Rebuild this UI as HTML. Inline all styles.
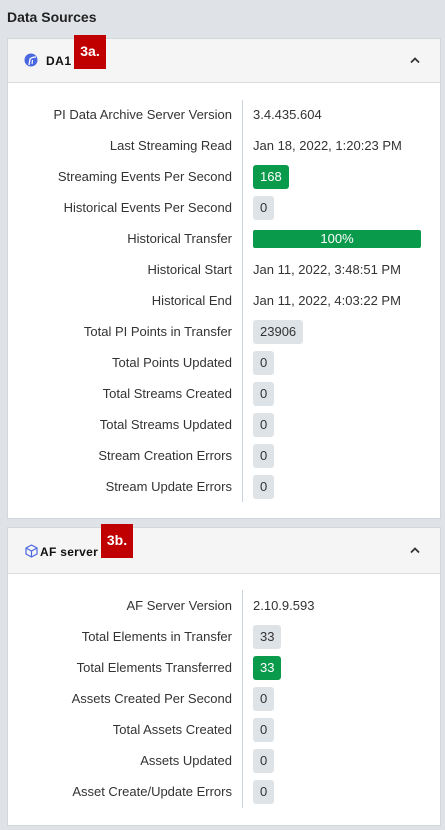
<!DOCTYPE html>
<html><head><meta charset="utf-8"><style>
*{margin:0;padding:0;box-sizing:border-box}
body{width:445px;height:830px;background:#dfe2e6;font-family:"Liberation Sans",sans-serif;position:relative;overflow:hidden;color:#222}
.top{position:absolute;left:7px;top:9px;font-size:14px;font-weight:bold;color:#222}
.card{position:absolute;left:7px;width:434px;background:#fff;border:1px solid #d4d7da}
.hd{position:absolute;left:0;top:0;right:0;background:#f5f5f5;border-bottom:1px solid #dcdcdc}
.title{position:absolute;font-size:12px;font-weight:bold;color:#111;letter-spacing:.5px}
.car{position:absolute;right:20px}
.tag{position:absolute;background:#c00000;color:#fff;font-weight:bold;font-size:14px;text-align:center;line-height:33px;width:32px;height:34px}
.div{position:absolute;left:234px;width:1px;background:#c9d3dd}
.row{position:absolute;left:0;right:0;height:24px;font-size:13px;color:#333}
.row .l{position:absolute;right:208px;top:4px;white-space:nowrap}
.row .v{position:absolute;left:245px;top:4px;white-space:nowrap}
.b{position:absolute;left:245px;top:0;height:24px;padding:0 7px;line-height:24px;background:#dee3e8;border-radius:3px;font-size:13px;color:#333}
.g{background:#0a9a4c;color:#fff}
.bar{position:absolute;left:245px;top:1px;width:168px;height:18px;background:#0a9a4c;border-radius:2px;color:#fff;text-align:center;font-size:13px;line-height:18px}
</style></head><body>
<div class="top">Data Sources</div>

<div class="card" style="top:38px;height:481px">
 <div class="hd" style="height:44px">
  <svg style="position:absolute;left:16px;top:14px" width="14" height="14" viewBox="0 0 14 14"><circle cx="7" cy="7" r="6.5" fill="#4a67e0"/><path d="M5 12 L6 6 Q8 4 12 4" stroke="#fff" stroke-width="1.3" fill="none"/><path d="M8 11 L8.5 7" stroke="#fff" stroke-width="1.1"/></svg>
  <div class="title" style="left:38px;top:15px">DA1</div>
  <svg class="car" style="top:18px" width="10" height="7" viewBox="0 0 10 7"><path d="M1 5.5 L5 1.5 L9 5.5" stroke="#333" stroke-width="1.8" fill="none"/></svg>
 </div>
 <div class="div" style="top:61px;height:402px"></div>
 <div class="row" style="top:64px"><span class="l">PI Data Archive Server Version</span><span class="v">3.4.435.604</span></div>
 <div class="row" style="top:95px"><span class="l">Last Streaming Read</span><span class="v">Jan 18, 2022, 1:20:23 PM</span></div>
 <div class="row" style="top:126px"><span class="l">Streaming Events Per Second</span><span class="b g">168</span></div>
 <div class="row" style="top:157px"><span class="l">Historical Events Per Second</span><span class="b">0</span></div>
 <div class="row" style="top:188px"><span class="l">Historical Transfer</span><span class="bar" style="top:3px">100%</span></div>
 <div class="row" style="top:219px"><span class="l">Historical Start</span><span class="v">Jan 11, 2022, 3:48:51 PM</span></div>
 <div class="row" style="top:250px"><span class="l">Historical End</span><span class="v">Jan 11, 2022, 4:03:22 PM</span></div>
 <div class="row" style="top:281px"><span class="l">Total PI Points in Transfer</span><span class="b">23906</span></div>
 <div class="row" style="top:312px"><span class="l">Total Points Updated</span><span class="b">0</span></div>
 <div class="row" style="top:343px"><span class="l">Total Streams Created</span><span class="b">0</span></div>
 <div class="row" style="top:374px"><span class="l">Total Streams Updated</span><span class="b">0</span></div>
 <div class="row" style="top:405px"><span class="l">Stream Creation Errors</span><span class="b">0</span></div>
 <div class="row" style="top:436px"><span class="l">Stream Update Errors</span><span class="b">0</span></div>
</div>
<div class="tag" style="left:74px;top:35px">3a.</div>

<div class="card" style="top:527px;height:299px">
 <div class="hd" style="height:46px">
  <svg style="position:absolute;left:17px;top:16px" width="13" height="14" viewBox="0 0 13 14"><path d="M6.5 1 L12 4 L12 10 L6.5 13 L1 10 L1 4 Z M1 4 L6.5 7 L12 4 M6.5 7 L6.5 13" stroke="#4a67e0" stroke-width="1.2" fill="none" stroke-linejoin="round"/></svg>
  <div class="title" style="left:32px;top:17px;letter-spacing:.3px">AF server</div>
  <svg class="car" style="top:19px" width="10" height="7" viewBox="0 0 10 7"><path d="M1 5.5 L5 1.5 L9 5.5" stroke="#333" stroke-width="1.8" fill="none"/></svg>
 </div>
 <div class="div" style="top:62px;height:218px"></div>
 <div class="row" style="top:66px"><span class="l">AF Server Version</span><span class="v">2.10.9.593</span></div>
 <div class="row" style="top:97px"><span class="l">Total Elements in Transfer</span><span class="b">33</span></div>
 <div class="row" style="top:128px"><span class="l">Total Elements Transferred</span><span class="b g">33</span></div>
 <div class="row" style="top:159px"><span class="l">Assets Created Per Second</span><span class="b">0</span></div>
 <div class="row" style="top:190px"><span class="l">Total Assets Created</span><span class="b">0</span></div>
 <div class="row" style="top:221px"><span class="l">Assets Updated</span><span class="b">0</span></div>
 <div class="row" style="top:252px"><span class="l">Asset Create/Update Errors</span><span class="b">0</span></div>
</div>
<div class="tag" style="left:101px;top:524px">3b.</div>
</body></html>
